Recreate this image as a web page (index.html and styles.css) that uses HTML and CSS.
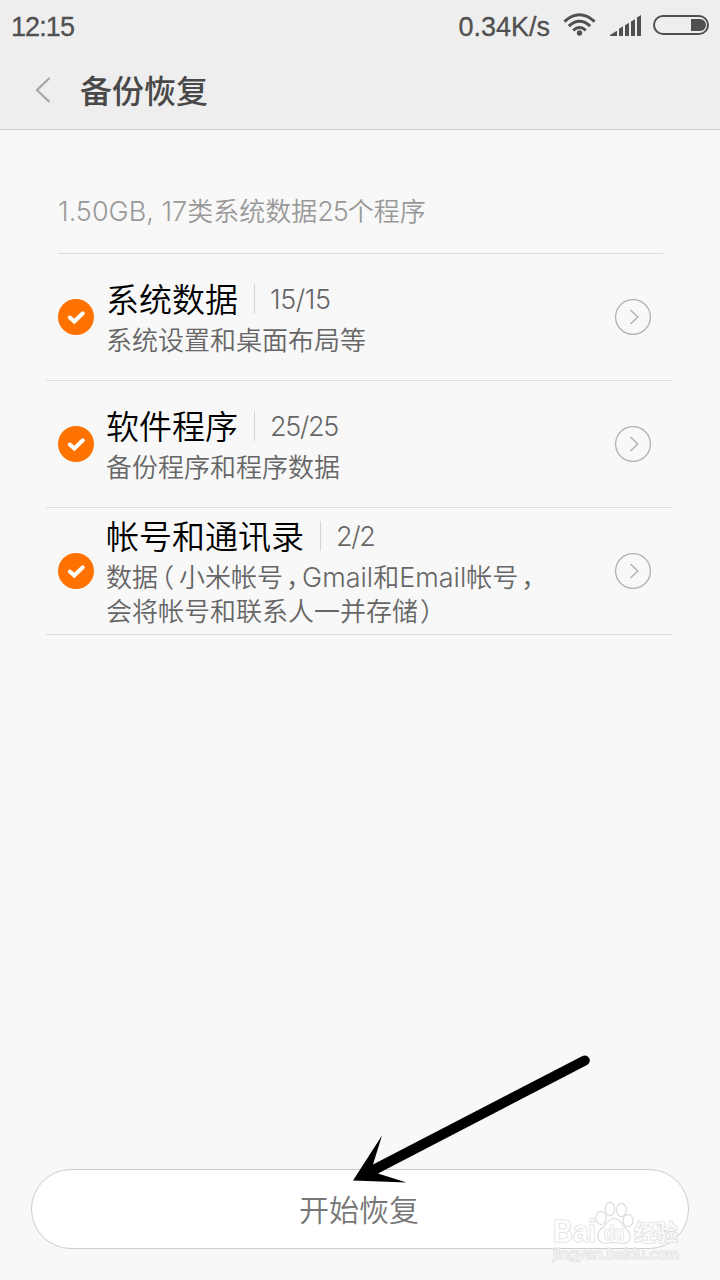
FILE: index.html
```html
<!DOCTYPE html>
<html lang="zh-CN">
<head>
<meta charset="utf-8">
<title>备份恢复</title>
<link rel="stylesheet" href="styles.css">
</head>
<body>
<div class="screen">
  <header class="top">
    <div class="status">
      <span class="clock">12:15</span>
      <span class="speed">0.34K/s</span>
      <svg class="status-icons" width="150" height="30" viewBox="560 10 150 30">
        <g fill="none" stroke="#505050" stroke-width="3">
          <path d="M564.4 21.6Q579.5 8 594.6 21.6"/>
          <path d="M568.8 26.2Q579.5 16.4 590.2 26.2"/>
          <path d="M573.2 30.3Q579.5 24.6 585.8 30.3"/>
        </g>
        <circle cx="579.5" cy="33" r="2.7" fill="#505050"/>
        <path fill="#505050" d="M610 36v-1l7-4.200V36zM619 36v-7.200l4-2.500V36zM625 36V25.200l4-2.400V36zM631 36V21.600l4-2.400V36zM637 36v-18.500l4-2.500V36z"/>
        <rect x="654" y="16" width="54" height="18" rx="9" fill="none" stroke="#505050" stroke-width="2"/>
        <path d="M691 19h9a6 6 0 0 1 0 12h-9z" fill="#505050"/>
      </svg>
    </div>
    <div class="titlebar">
      <svg class="back" width="16" height="28" viewBox="0 0 16 28"><path d="M14.500 2L2 14L14.500 26" fill="none" stroke="#a6a6a6" stroke-width="2.200"/></svg>
      <h1 class="title">备份恢复</h1>
    </div>
  </header>

  <main class="content">
    <p class="summary"><span class="latin">1.50GB, 17</span>类系统数据<span class="latin summary-num">25</span>个程序</p>
    <ul class="list">
      <li class="row">
        <svg class="check" width="36" height="36" viewBox="0 0 36 36"><circle cx="18" cy="18" r="18" fill="#ff7200"/><path d="M11.800 18.500L16.300 22.500L24.800 14.300" fill="none" stroke="#fff" stroke-width="4" stroke-linecap="round"/></svg>
        <div class="info">
          <div class="heading"><span class="name">系统数据</span><span class="count count-narrow">15/15</span></div>
          <div class="desc">系统设置和桌面布局等</div>
        </div>
        <svg class="more" width="36" height="36" viewBox="0 0 36 36"><circle cx="18" cy="18" r="17.400" fill="none" stroke="#b2b2b2" stroke-width="1.300"/><path d="M15.500 11L22.800 18L15.500 25" fill="none" stroke="#b2b2b2" stroke-width="1.500"/></svg>
      </li>
      <li class="row">
        <svg class="check" width="36" height="36" viewBox="0 0 36 36"><circle cx="18" cy="18" r="18" fill="#ff7200"/><path d="M11.800 18.500L16.300 22.500L24.800 14.300" fill="none" stroke="#fff" stroke-width="4" stroke-linecap="round"/></svg>
        <div class="info">
          <div class="heading"><span class="name">软件程序</span><span class="count">25/25</span></div>
          <div class="desc">备份程序和程序数据</div>
        </div>
        <svg class="more" width="36" height="36" viewBox="0 0 36 36"><circle cx="18" cy="18" r="17.400" fill="none" stroke="#b2b2b2" stroke-width="1.300"/><path d="M15.500 11L22.800 18L15.500 25" fill="none" stroke="#b2b2b2" stroke-width="1.500"/></svg>
      </li>
      <li class="row">
        <svg class="check" width="36" height="36" viewBox="0 0 36 36"><circle cx="18" cy="18" r="18" fill="#ff7200"/><path d="M11.800 18.500L16.300 22.500L24.800 14.300" fill="none" stroke="#fff" stroke-width="4" stroke-linecap="round"/></svg>
        <div class="info">
          <div class="heading"><span class="name">帐号和通讯录</span><span class="count">2/2</span></div>
          <div class="desc">数据<span class="paren-open">（</span>小米帐号<span class="comma">，</span><span class="latin">Gmail</span>和<span class="latin">Email</span>帐号<span class="comma">，</span><br>会将帐号和联系人一并存储<span class="paren-close">）</span></div>
        </div>
        <svg class="more" width="36" height="36" viewBox="0 0 36 36"><circle cx="18" cy="18" r="17.400" fill="none" stroke="#b2b2b2" stroke-width="1.300"/><path d="M15.500 11L22.800 18L15.500 25" fill="none" stroke="#b2b2b2" stroke-width="1.500"/></svg>
      </li>
    </ul>
  </main>

  <footer class="footer"><button class="start" type="button">开始恢复</button></footer>

  <svg class="arrow" width="240" height="130" viewBox="352 1054 240 130"><path d="M353 1180.500L382 1135.500L373 1164.500L582.500 1056A5 5 0 0 1 587 1065L378 1173.500L406.500 1182.500Z" fill="#000"/></svg>

  <svg class="watermark" width="140" height="70" viewBox="548 1198 140 70">
    <g fill="#fff" fill-opacity=".7" stroke="#dcdcdc" stroke-width="1.200">
      <ellipse cx="601" cy="1218" rx="5.200" ry="6.600"/>
      <ellipse cx="610" cy="1209" rx="4.800" ry="6.600"/>
      <ellipse cx="621.500" cy="1210" rx="4.900" ry="6.600"/>
      <ellipse cx="628" cy="1220.500" rx="5" ry="6.200"/>
      <path d="M605 1225Q614 1213 622 1224Q625 1228 629 1232Q633 1242 624 1243.500Q614 1241.500 604 1243.500Q594 1240 600 1230Q603 1228 605 1225Z"/>
      <text class="wm-bai" x="553" y="1242" textLength="43" lengthAdjust="spacingAndGlyphs">Bai</text>
      <text class="wm-du" x="604" y="1240" textLength="20" lengthAdjust="spacingAndGlyphs">du</text>
      <text class="wm-cn" x="634" y="1241" textLength="44" lengthAdjust="spacingAndGlyphs">经验</text>
      <text class="wm-url" x="553" y="1259" textLength="126" lengthAdjust="spacingAndGlyphs">jingyan.baidu.com</text>
    </g>
  </svg>
</div>
</body>
</html>
```

FILE: styles.css
```css
* { box-sizing: border-box; }
body { margin: 0; background: #f7f7f7; }
.screen {
  position: relative;
  display: flex;
  flex-direction: column;
  width: 720px;
  height: 1280px;
  overflow: hidden;
  background: #f8f8f8;
  font-family: "Liberation Sans", "Noto Sans CJK SC", sans-serif;
}
.top { height: 130px; background: #eee; border-bottom: 1px solid #ccc; }
.status { display: flex; height: 52px; padding: 10px 10px 0 11px; color: #505050; line-height: 32px; }
.clock { padding-top: 1px; font-size: 27px; letter-spacing: -0.9px; -webkit-text-stroke: 0.3px #505050; }
.speed { margin-left: auto; padding-top: 1px; font-size: 27px; -webkit-text-stroke: 0.3px #505050; }
.status-icons { margin-left: 10px; flex: none; }
.titlebar { display: flex; align-items: center; height: 75px; padding-left: 35px; }
.back { flex: none; }
.title { margin: 0 0 0 29px; padding-top: 4px; color: #484848; font-size: 32px; font-weight: 500; line-height: 48px; }
.content { flex: 1; padding: 0 46px; }
.summary {
  height: 124px;
  margin: 0 11px 0 12px;
  padding-top: 63px;
  border-bottom: 1px solid #ddd;
  color: #999;
  font-size: 26px;
  font-weight: 350;
  line-height: 39px;
  white-space: nowrap;
}
.latin, .count { font-family: Inter, "Liberation Sans", sans-serif; font-weight: 300; }
.latin { font-size: 27px; line-height: 1; }
.summary-num { letter-spacing: -1px; }
.list { margin: 0; padding: 0; width: 627px; list-style: none; }
.row {
  display: flex;
  align-items: center;
  height: 127px;
  padding: 0 22px 0 12px;
  border-bottom: 1px solid #ddd;
}
.check, .more { flex: none; }
.info { flex: 1; padding: 2px 0 0 12px; }
.heading { display: flex; align-items: center; height: 42px; }
.name { color: #000; font-size: 33px; font-weight: 350; line-height: 42px; }
.count {
  height: 30px;
  margin: 0 0 5px 16px;
  padding-left: 15px;
  border-left: 1px solid #d4d4d4;
  color: #666;
  font-size: 27px;
  letter-spacing: -1.3px;
  line-height: 32px;
}
.count-narrow { letter-spacing: -0.4px; }
.desc { height: 34px; padding-top: 2px; color: #666; font-size: 26px; font-weight: 350; line-height: 34px; white-space: nowrap; }
.row:last-child .desc { height: 68px; }
.paren-open, .paren-close, .comma { font-feature-settings: "halt"; }
.paren-open { margin: 0 5px 0 3px; }
.paren-close { margin-left: 2px; }
.comma { margin: 0 3px 0 3px; }
.footer { padding: 0 31px 31px; }
.start {
  display: block;
  width: 658px;
  height: 80px;
  padding: 0 2px 3px 0;
  border: 1px solid #ccc;
  border-radius: 40px;
  background: #fff;
  color: #777;
  font: 350 30px "Noto Sans CJK SC", sans-serif;
}
.arrow { position: absolute; left: 352px; top: 1054px; }
.watermark { position: absolute; left: 548px; top: 1198px; }
.watermark text { paint-order: stroke; }
.wm-bai { font: bold 31px "Liberation Sans", sans-serif; }
.wm-du { font: bold 20px "Liberation Sans", sans-serif; }
.wm-cn { font: bold 23px "Noto Sans CJK SC", sans-serif; }
.wm-url { font: 14px "Liberation Sans", sans-serif; }
```
